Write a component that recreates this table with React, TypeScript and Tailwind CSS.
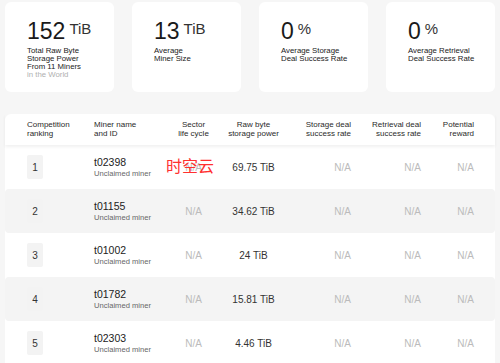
import React from "react";

const stats = [
  { value: "152", unit: "TiB", lines: ["Total Raw Byte", "Storage Power", "From 11 Miners"], extra: "in the World" },
  { value: "13", unit: "TiB", lines: ["Average", "Miner Size"] },
  { value: "0", unit: "%", lines: ["Average Storage", "Deal Success Rate"] },
  { value: "0", unit: "%", lines: ["Average Retrieval", "Deal Success Rate"] },
];

const miners = [
  { rank: 1, id: "t02398", power: "69.75 TiB" },
  { rank: 2, id: "t01155", power: "34.62 TiB" },
  { rank: 3, id: "t01002", power: "24 TiB" },
  { rank: 4, id: "t01782", power: "15.81 TiB" },
  { rank: 5, id: "t02303", power: "4.46 TiB" },
];

const cols = "grid grid-cols-[67px_71px_57px_63px_66px_70px_53px] pl-[22px] pr-[21px] items-center";

export default function App() {
  return (
    <div
      className="relative w-[500px] h-[363px] overflow-hidden bg-[#f6f6f6]"
      style={{ fontFamily: "'Liberation Sans', Arial, sans-serif" }}
    >
      {/* Stat cards */}
      <div className="grid grid-cols-4 gap-[18px] px-[5px] pt-[2px]">
        {stats.map((s, i) => (
          <div key={i} className="h-[90px] bg-white rounded-[6px] pl-[22px] pt-[18px]">
            <div className="flex items-start">
              <span className="text-[23px] leading-[23px] text-[#1a1a1a]">{s.value}</span>
              <span className="text-[15px] leading-[15px] text-[#333] ml-[4px] mt-[1px]">{s.unit}</span>
            </div>
            <div className="mt-[4px] text-[7.8px] leading-[7.9px] text-[#222]">
              {s.lines.map((l) => (
                <div key={l}>{l}</div>
              ))}
              {s.extra && <div className="text-[#b0b0b0]">{s.extra}</div>}
            </div>
          </div>
        ))}
      </div>

      {/* Ranking table */}
      <div className="mx-[5px] mt-[22px] bg-white rounded-t-[6px]">
        <div className={`${cols} h-[31px] relative z-10 shadow-[0_2px_3px_rgba(0,0,0,0.06)] text-[8px] leading-[8.3px] text-[#2a2a2a]`}>
          <div>Competition<br />ranking</div>
          <div>Miner name<br />and ID</div>
          <div className="text-center">Sector<br />life cycle</div>
          <div className="text-center">Raw byte<br />storage power</div>
          <div className="text-right">Storage deal<br />success rate</div>
          <div className="text-right">Retrieval deal<br />success rate</div>
          <div className="text-right">Potential<br />reward</div>
        </div>

        {miners.map((m) => (
          <div
            key={m.id}
            className={`${cols} h-[44px] rounded-[4px] ${m.rank % 2 === 0 ? "bg-[#f4f4f4]" : "bg-white"}`}
          >
            <div>
              <div className="w-[16px] h-[24px] rounded-[2px] bg-[#f3f3f3] flex items-center justify-center text-[10px] text-[#333]">
                {m.rank}
              </div>
            </div>
            <div>
              <div className="text-[10.5px] leading-[12px] text-[#222]">{m.id}</div>
              <div className="text-[7.6px] leading-[10px] text-[#666] mt-[1px]">Unclaimed miner</div>
            </div>
            <div className="text-center text-[10px] text-[#bbb]">N/A</div>
            <div className="text-center text-[10px] text-[#333]">{m.power}</div>
            <div className="text-right text-[10px] text-[#bbb]">N/A</div>
            <div className="text-right text-[10px] text-[#bbb]">N/A</div>
            <div className="text-right text-[10px] text-[#bbb]">N/A</div>
          </div>
        ))}
      </div>

      {/* Watermark */}
      <div
        className="absolute left-[166px] top-[157px] text-[16px] leading-[16px] text-[#ff3030]"
        style={{ fontFamily: "'Noto Sans CJK SC', sans-serif" }}
      >
        时空云
      </div>
    </div>
  );
}
